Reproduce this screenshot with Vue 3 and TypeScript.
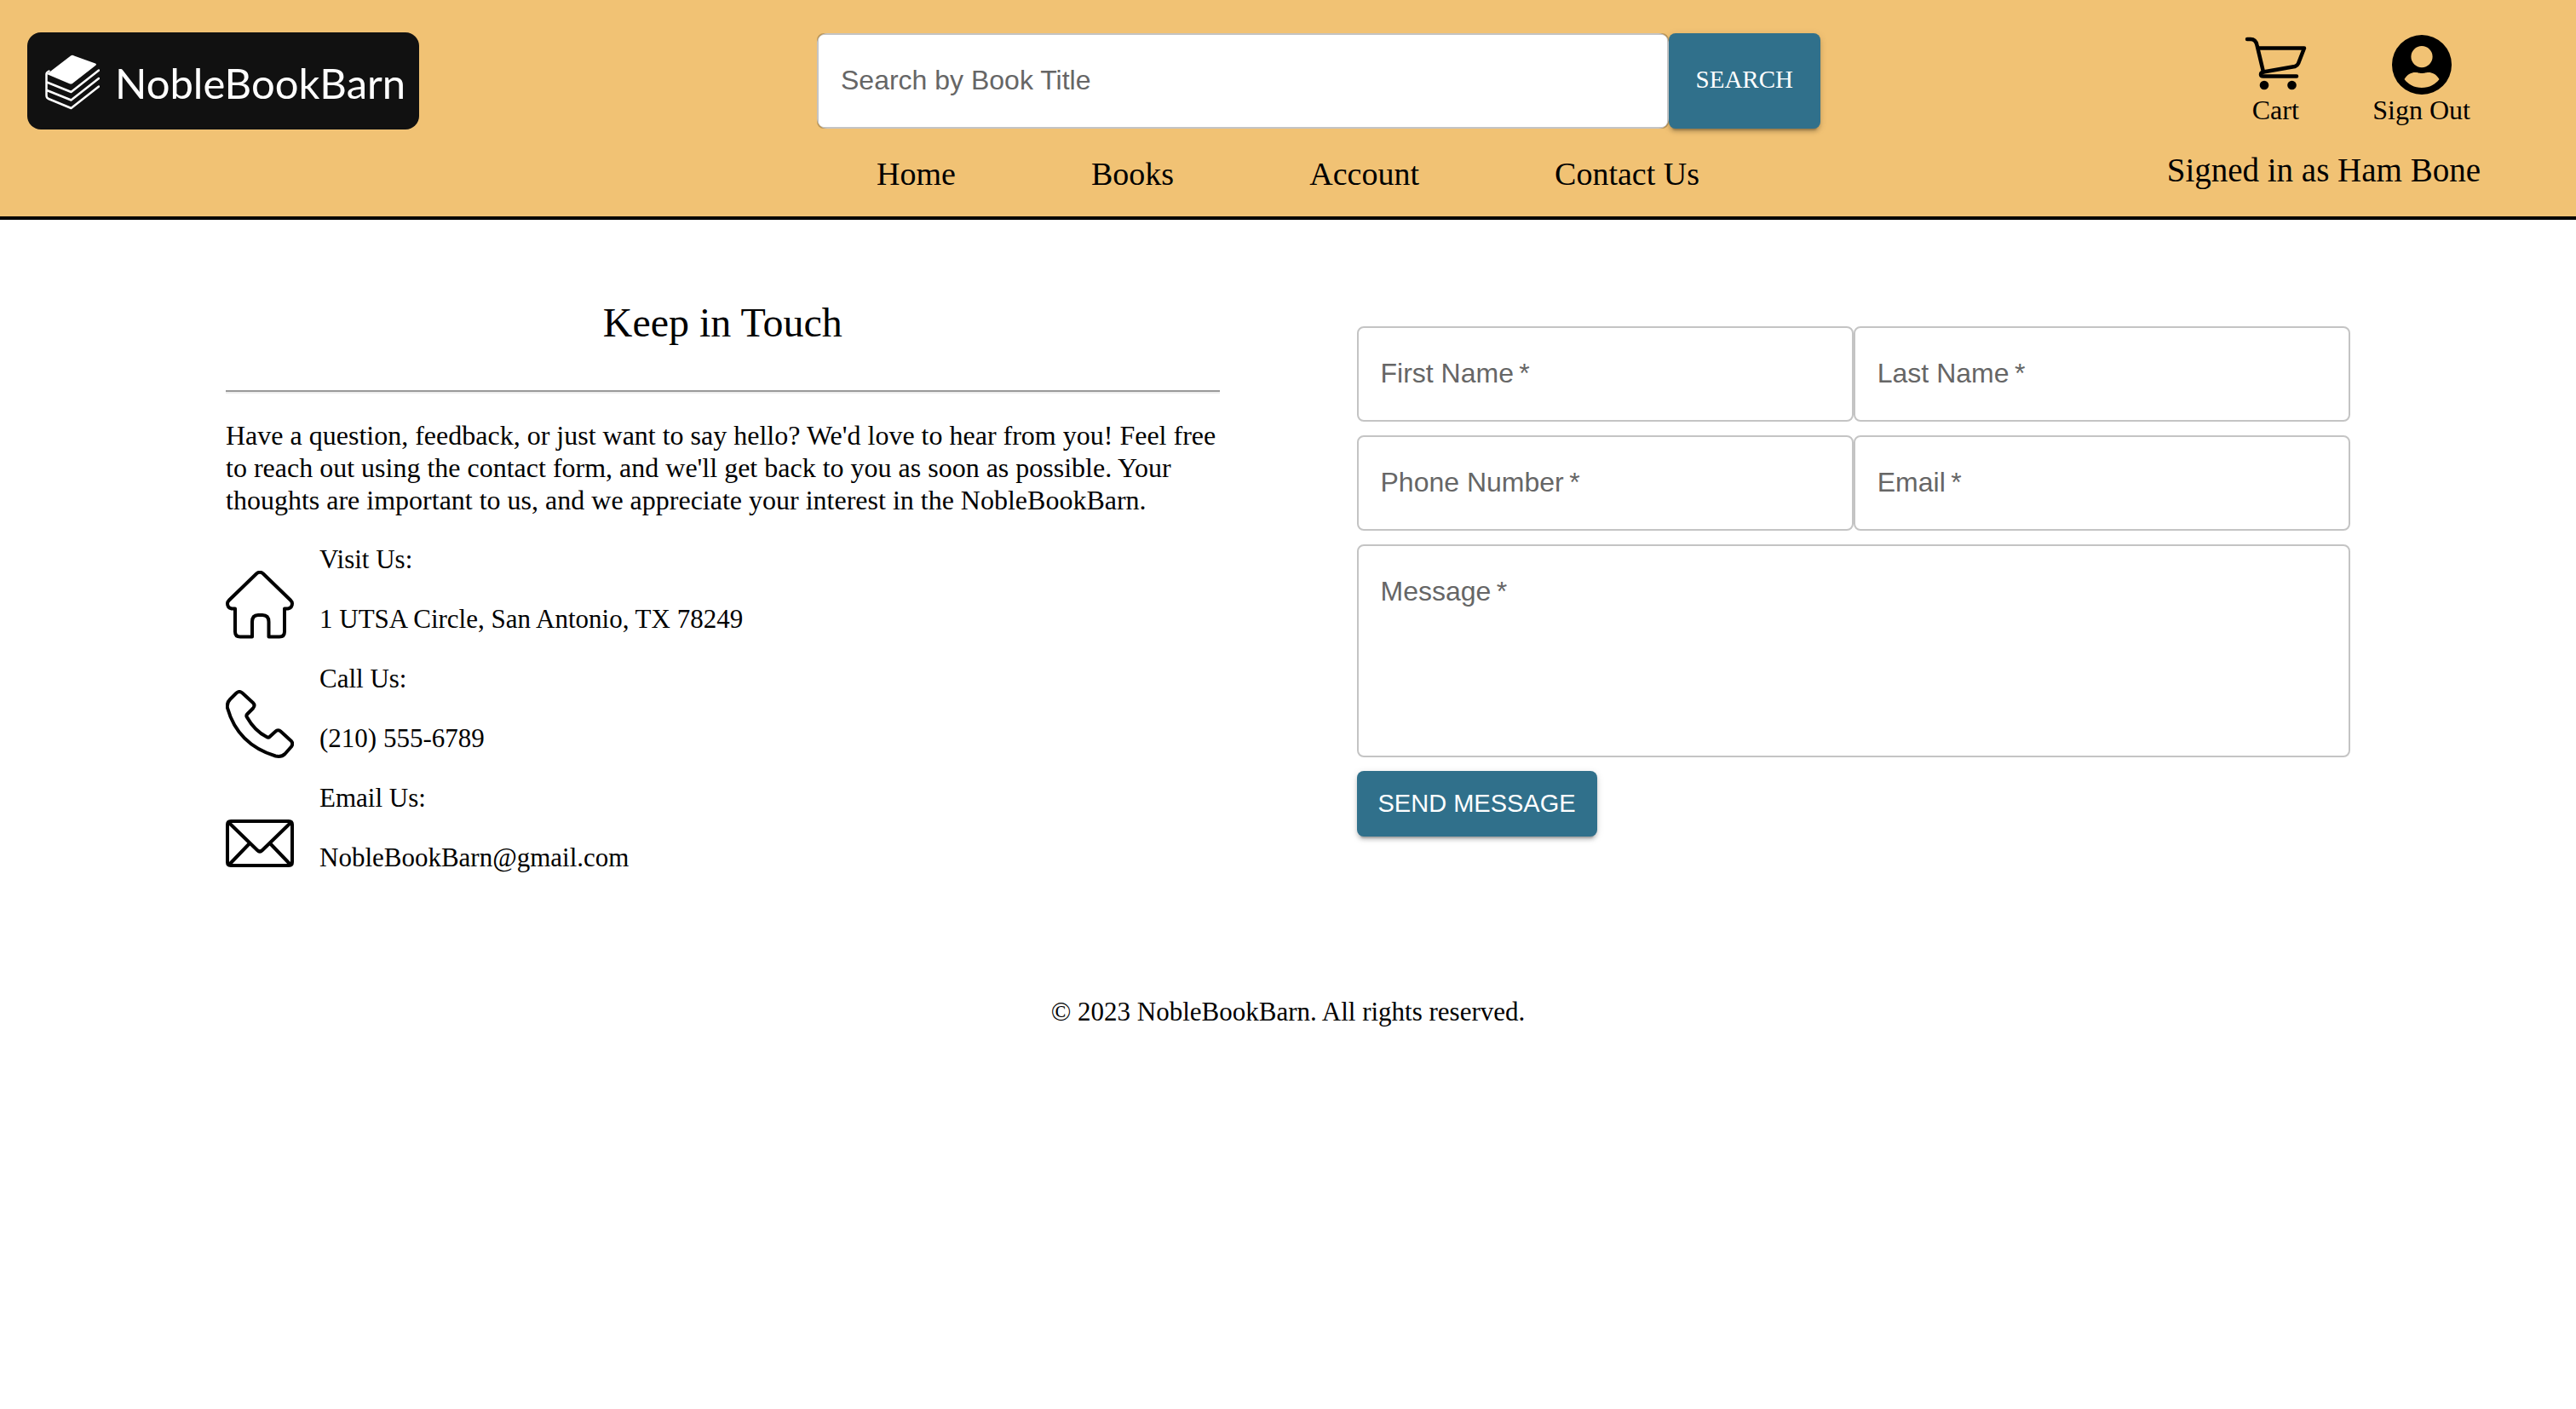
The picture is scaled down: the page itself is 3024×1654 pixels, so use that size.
<script setup lang="ts">
import { reactive, ref } from 'vue'

interface Field {
  id: 'first' | 'last' | 'phone' | 'email'
  label: string
  type: string
}

const search = ref('')
const links: string[] = ['Home', 'Books', 'Account', 'Contact Us']
const fields: Field[] = [
  { id: 'first', label: 'First Name', type: 'text' },
  { id: 'last', label: 'Last Name', type: 'text' },
  { id: 'phone', label: 'Phone Number', type: 'tel' },
  { id: 'email', label: 'Email', type: 'email' },
]
const form = reactive({ first: '', last: '', phone: '', email: '', message: '' })

const contacts = [
  {
    title: 'Visit Us:',
    value: '1 UTSA Circle, San Antonio, TX 78249',
    paths: [
      'M31 77.5H17q-6 0-6-6V44.5H7q-5-1-5-6 0-2 2-4L36 3.5q4-3.5 8 0L76 34.500q2 2 2 4 0 5-5 6h-4V71.500q0 6-6 6H50.500V60q0-8-7.500-8h-5q-7 0-7 8z',
    ],
  },
  {
    title: 'Call Us:',
    value: '(210) 555-6789',
    paths: [
      'M12.500 3.500q3.500-3 7 0L32 15q3 3 0 6.500L25.500 28q-2 2-.5 4Q34 48 48 55q2.500 1.500 4-.5L58 49q3.500-3.500 7 0L77 60q2.500 3 0 6.500L69.500 75q-4 4-11 2.500Q14 64 2 21q-1-6 3-10z',
    ],
  },
  {
    title: 'Email Us:',
    value: 'NobleBookBarn@gmail.com',
    paths: ['M6 14h68q4 0 4 4v44q0 4-4 4H6q-4 0-4-4V18q0-4 4-4z', 'M4 16l33 32q3 3 6 0l33-32', 'M4 65l24-25M76 65L52 40'],
  },
]
</script>

<template>
  <div class="page">
    <header class="header">
      <a class="logo" href="#">
        <svg class="logo-mark" viewBox="0 0 66 68" aria-hidden="true">
          <path
            d="M32 2.500q2-1.300 4 0L61 11.500q2 1 0 2.500L34 35q-1.500 1-4 0L4 24z"
            fill="#fff"
          />
          <path
            d="M3.500 24v25q0 3 2.500 4l26.500 11L65 38.500M4 33.500l28.500 11.500L65 19.500M4 43l28.500 11.500L65 29M3.500 24q0-2 3-3.500"
            fill="none"
            stroke="#fff"
            stroke-width="2.500"
            stroke-linecap="round"
            stroke-linejoin="round"
          />
        </svg>
        <span>NobleBookBarn</span>
      </a>

      <form class="search" @submit.prevent>
        <div class="field search-field">
          <input id="search" v-model="search" type="text" />
          <label v-show="!search" for="search">Search by Book Title</label>
        </div>
        <button class="button serif" type="submit">SEARCH</button>
      </form>

      <div class="actions">
        <a class="action" href="#">
          <svg width="80" height="72" viewBox="0 0 80 72" aria-hidden="true">
            <g fill="none" stroke="#000" stroke-width="4.500" stroke-linecap="round" stroke-linejoin="round">
              <path d="M7 6h4q6 0 7.500 7L26 44.500" />
              <path d="M20 16.500h54l-7 18q-1 2.500-4 3.500L26 44.500q-3 .5-3 3 0 2 3 2h39" />
            </g>
            <circle cx="27" cy="60" r="5.300" />
            <circle cx="59.500" cy="60" r="5.300" />
          </svg>
          Cart
        </a>
        <a class="action" href="#">
          <svg width="72" height="72" viewBox="0 0 72 72" aria-hidden="true">
            <path
              fill-rule="evenodd"
              d="M36 1a35 35 0 1 0 0 70a35 35 0 1 0 0-70zM36 14a12.600 12.600 0 1 1 0 25.200a12.600 12.600 0 1 1 0-25.200zM15.500 53C19 47 24 45 28 45c4 0 4 1 8 1s4-1 8-1c4 0 9 2 12.500 8C52 59 45 63 36 63S20 59 15.500 53z"
            />
          </svg>
          Sign Out
        </a>
      </div>

      <nav class="nav">
        <a v-for="link in links" :key="link" href="#">{{ link }}</a>
      </nav>
      <div class="signed">Signed in as Ham Bone</div>
    </header>

    <main class="main">
      <section class="info">
        <h2>Keep in Touch</h2>
        <hr />
        <p>
          Have a question, feedback, or just want to say hello? We'd love to hear from you! Feel free
          to reach out using the contact form, and we'll get back to you as soon as possible. Your
          thoughts are important to us, and we appreciate your interest in the NobleBookBarn.
        </p>
        <div class="contacts">
          <div v-for="item in contacts" :key="item.title" class="contact">
            <svg width="80" height="80" viewBox="0 0 80 80" aria-hidden="true">
              <path v-for="d in item.paths" :key="d" :d="d" />
            </svg>
            <div class="contact-text">
              <p>{{ item.title }}</p>
              <p>{{ item.value }}</p>
            </div>
          </div>
        </div>
      </section>

      <form class="form" @submit.prevent>
        <div class="fields">
          <div v-for="f in fields" :key="f.id" class="field">
            <input :id="f.id" v-model="form[f.id]" :type="f.type" required />
            <label v-show="!form[f.id]" :for="f.id">{{ f.label }}&thinsp;*</label>
          </div>
        </div>
        <div class="field">
          <textarea id="message" v-model="form.message" required></textarea>
          <label v-show="!form.message" for="message">Message&thinsp;*</label>
        </div>
        <button class="button send" type="submit">SEND MESSAGE</button>
      </form>
    </main>

    <footer class="footer">© 2023 NobleBookBarn. All rights reserved.</footer>
  </div>
</template>

<style>
body {
  margin: 0;
  background: #fff;
}
</style>

<style scoped>
.page {
  font-family: 'Liberation Serif', serif;
  font-size: 32px;
  line-height: 38px;
  color: #000;
}

a {
  color: inherit;
  text-decoration: none;
}

.header {
  display: grid;
  grid-template-columns: 927fr 1178fr 775fr;
  row-gap: 24px;
  padding: 38px 112px 28px 32px;
  background: #f1c274;
  border-bottom: 4px solid #000;
}

.logo {
  display: flex;
  align-items: center;
  justify-self: start;
  box-sizing: border-box;
  width: 460px;
  height: 114px;
  padding: 3px 0 0 19px;
  gap: 18px;
  border-radius: 16px;
  background: #111;
  color: #fff;
  font-family: Lato, sans-serif;
  font-size: 49px;
  line-height: 56px;
}

.logo-mark {
  width: 66px;
  height: 68px;
}

.search {
  display: flex;
  align-self: center;
}

.field {
  position: relative;
}

.search-field {
  flex: 1;
  border-radius: 12px;
  background: #fff;
}

.field input,
.field textarea {
  display: block;
  box-sizing: border-box;
  width: 100%;
  height: 112px;
  margin: 0;
  padding: 32px 28px;
  border: 2px solid rgba(0, 0, 0, 0.23);
  border-radius: 8px;
  background: transparent;
  color: #222;
  font-family: 'Liberation Sans', Arial, sans-serif;
  font-size: 32px;
  outline: none;
  resize: none;
}

.field textarea {
  height: 250px;
}

.field label {
  position: absolute;
  top: 32px;
  left: 28px;
  color: #666;
  font-family: 'Liberation Sans', Arial, sans-serif;
  font-size: 32px;
  line-height: 46px;
  pointer-events: none;
}

.button {
  border: 0;
  border-radius: 8px;
  background: #30708b;
  color: #fff;
  font-family: 'Liberation Sans', Arial, sans-serif;
  font-size: 29px;
  padding: 0 25px;
  box-shadow:
    0 6px 2px -4px rgba(0, 0, 0, 0.2),
    0 4px 4px rgba(0, 0, 0, 0.14),
    0 2px 10px rgba(0, 0, 0, 0.12);
  cursor: pointer;
}

.button.serif {
  padding: 0 32px 3px;
  font-family: 'Liberation Serif', serif;
}

.send {
  align-self: flex-start;
  height: 77px;
}

.actions {
  display: flex;
  justify-content: flex-end;
  gap: 74px;
  padding: 2px 12px 0 0;
}

.action {
  display: flex;
  flex-direction: column;
  align-items: center;
  line-height: 34px;
}

.nav {
  grid-column: 2;
  display: flex;
  justify-content: space-between;
  padding: 6px 142px 0 70px;
  font-size: 38px;
  line-height: 44px;
}

.signed {
  padding-top: 2px;
  text-align: right;
  font-size: 39px;
  line-height: 44px;
}

.main {
  display: grid;
  grid-template-columns: 1fr 1fr;
  gap: 161px;
  padding: 93px 265px 0;
}

h2 {
  margin: 0 0 51px;
  text-align: center;
  font-size: 48px;
  font-weight: 400;
  line-height: 56px;
}

hr {
  height: 2px;
  margin: 0 0 30px;
  border: 0;
  border-top: 2px solid #9a9a9a;
  background: #eee;
}

p {
  margin: 0;
}

.contacts {
  display: flex;
  flex-direction: column;
  gap: 28px;
  margin-top: 32px;
  font-size: 31px;
}

.contact {
  display: flex;
  gap: 30px;
}

.contact svg {
  margin-top: 32px;
  fill: none;
  stroke: #000;
  stroke-width: 4px;
  stroke-linejoin: round;
}

.contact-text {
  display: flex;
  flex-direction: column;
  gap: 32px;
}

.form {
  display: flex;
  flex-direction: column;
  gap: 16px;
  padding-top: 32px;
}

.fields {
  display: grid;
  grid-template-columns: 1fr 1fr;
  row-gap: 16px;
}

.footer {
  margin-top: 139px;
  text-align: center;
  font-size: 31px;
}
</style>
